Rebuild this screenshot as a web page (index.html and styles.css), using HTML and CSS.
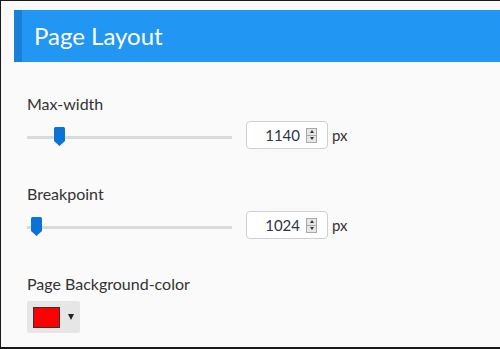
FILE: index.html
```html
<!DOCTYPE html>
<html lang="en">
<head>
    <meta charset="UTF-8">
    <meta name="viewport" content="width=device-width, initial-scale=1.0">
    <title>Page Layout</title>
    <link rel="stylesheet" href="styles.css">
</head>
<body>
    <div class="panel-header">
        <h2>Page Layout</h2>
    </div>

    <div class="panel-body">
        <!-- Max width -->
        <div class="field">
            <label class="field-label">Max-width</label>
            <div class="field-row">
                <div class="slider">
                    <div class="slider-track"></div>
                    <svg class="slider-thumb" style="left: 27px" width="11" height="19" viewBox="0 0 11 19">
                        <path d="M1.5 0H9.5Q11 0 11 1.5V14L5.5 19L0 14V1.5Q0 0 1.5 0Z" fill="#0a74d6"/>
                    </svg>
                </div>
                <div class="number-field">
                    <input type="text" value="1140">
                    <span class="spinner"><span class="spin-up"></span><span class="spin-down"></span></span>
                </div>
                <span class="unit">px</span>
            </div>
        </div>

        <!-- Breakpoint -->
        <div class="field">
            <label class="field-label">Breakpoint</label>
            <div class="field-row">
                <div class="slider">
                    <div class="slider-track"></div>
                    <svg class="slider-thumb" style="left: 4px" width="11" height="19" viewBox="0 0 11 19">
                        <path d="M1.5 0H9.5Q11 0 11 1.5V14L5.5 19L0 14V1.5Q0 0 1.5 0Z" fill="#0a74d6"/>
                    </svg>
                </div>
                <div class="number-field">
                    <input type="text" value="1024">
                    <span class="spinner"><span class="spin-up"></span><span class="spin-down"></span></span>
                </div>
                <span class="unit">px</span>
            </div>
        </div>

        <!-- Background colour -->
        <div class="field">
            <label class="field-label">Page Background-color</label>
            <div class="color-button">
                <span class="color-swatch"></span>
                <span class="color-arrow"></span>
            </div>
        </div>
    </div>
</body>
</html>
```

FILE: styles.css
```css
/* Global Styles */
html {
    height: 100%;
}

body {
    font-family: Lato, 'Open Sans', sans-serif;
    background-color: #fafafa;
    color: #333;
    margin: 0;
    height: 100%;
    box-sizing: border-box;
    border-top: 1px solid #1a1a1a;
    border-left: 1px solid #1a1a1a;
    border-bottom: 2px solid #1a1a1a;
    overflow: hidden;
}

/* Header */
.panel-header {
    margin: 9px 0 0 13px;
    height: 52px;
    background-color: #2196f3;
    border-left: 8px solid #1a80d6;
    display: flex;
    align-items: center;
}

.panel-header h2 {
    margin: 0 0 0 12px;
    font-size: 24px;
    font-weight: 400;
    color: white;
    line-height: 30px;
}

/* Body */
.panel-body {
    padding: 33px 0 0 26px;
}

.field {
    margin-bottom: 36px;
}

.field:last-child {
    margin-bottom: 0;
}

.field-label {
    display: block;
    font-size: 16px;
    line-height: 18px;
    margin-bottom: 8px;
}

.field-row {
    display: flex;
    align-items: center;
}

/* Slider */
.slider {
    position: relative;
    width: 205px;
    height: 20px;
    margin-top: 4px;
    display: flex;
    align-items: center;
}

.slider-track {
    width: 100%;
    height: 3px;
    background-color: #dadada;
}

.slider-thumb {
    position: absolute;
    top: 0;
}

/* Number input */
.number-field {
    width: 82px;
    height: 28px;
    box-sizing: border-box;
    margin-left: 14px;
    border: 1px solid #cfcfcf;
    border-radius: 4px;
    background-color: white;
    display: flex;
    align-items: center;
    padding-right: 10px;
}

.number-field input {
    flex: 1;
    min-width: 0;
    border: none;
    background: transparent;
    padding: 0;
    margin-right: 6px;
    font-family: Lato, 'Open Sans', sans-serif;
    font-size: 15px;
    color: #2d3540;
    text-align: right;
    outline: none;
}

.spinner {
    width: 11px;
    height: 15px;
    box-sizing: border-box;
    border: 1px solid #a9a9a9;
    background-color: #e6e6e6;
    display: flex;
    flex-direction: column;
}

.spin-up,
.spin-down {
    flex: 1;
    display: flex;
    align-items: center;
    justify-content: center;
}

.spin-up {
    border-bottom: 1px solid #a9a9a9;
}

.spin-up::after {
    content: "";
    border-left: 2.5px solid transparent;
    border-right: 2.5px solid transparent;
    border-bottom: 3px solid #333;
}

.spin-down::after {
    content: "";
    border-left: 2.5px solid transparent;
    border-right: 2.5px solid transparent;
    border-top: 3px solid #333;
}

.unit {
    margin-left: 4px;
    font-size: 15px;
}

/* Colour picker */
.color-button {
    width: 53px;
    height: 32px;
    box-sizing: border-box;
    background-color: #e6e6e6;
    border-radius: 2px;
    display: flex;
    align-items: center;
    padding-left: 6px;
}

.color-swatch {
    width: 27px;
    height: 21px;
    box-sizing: border-box;
    background-color: #ff0000;
    border: 1px solid #333;
}

.color-arrow {
    margin-left: 8px;
    border-left: 3px solid transparent;
    border-right: 3px solid transparent;
    border-top: 6px solid #222;
}
```
